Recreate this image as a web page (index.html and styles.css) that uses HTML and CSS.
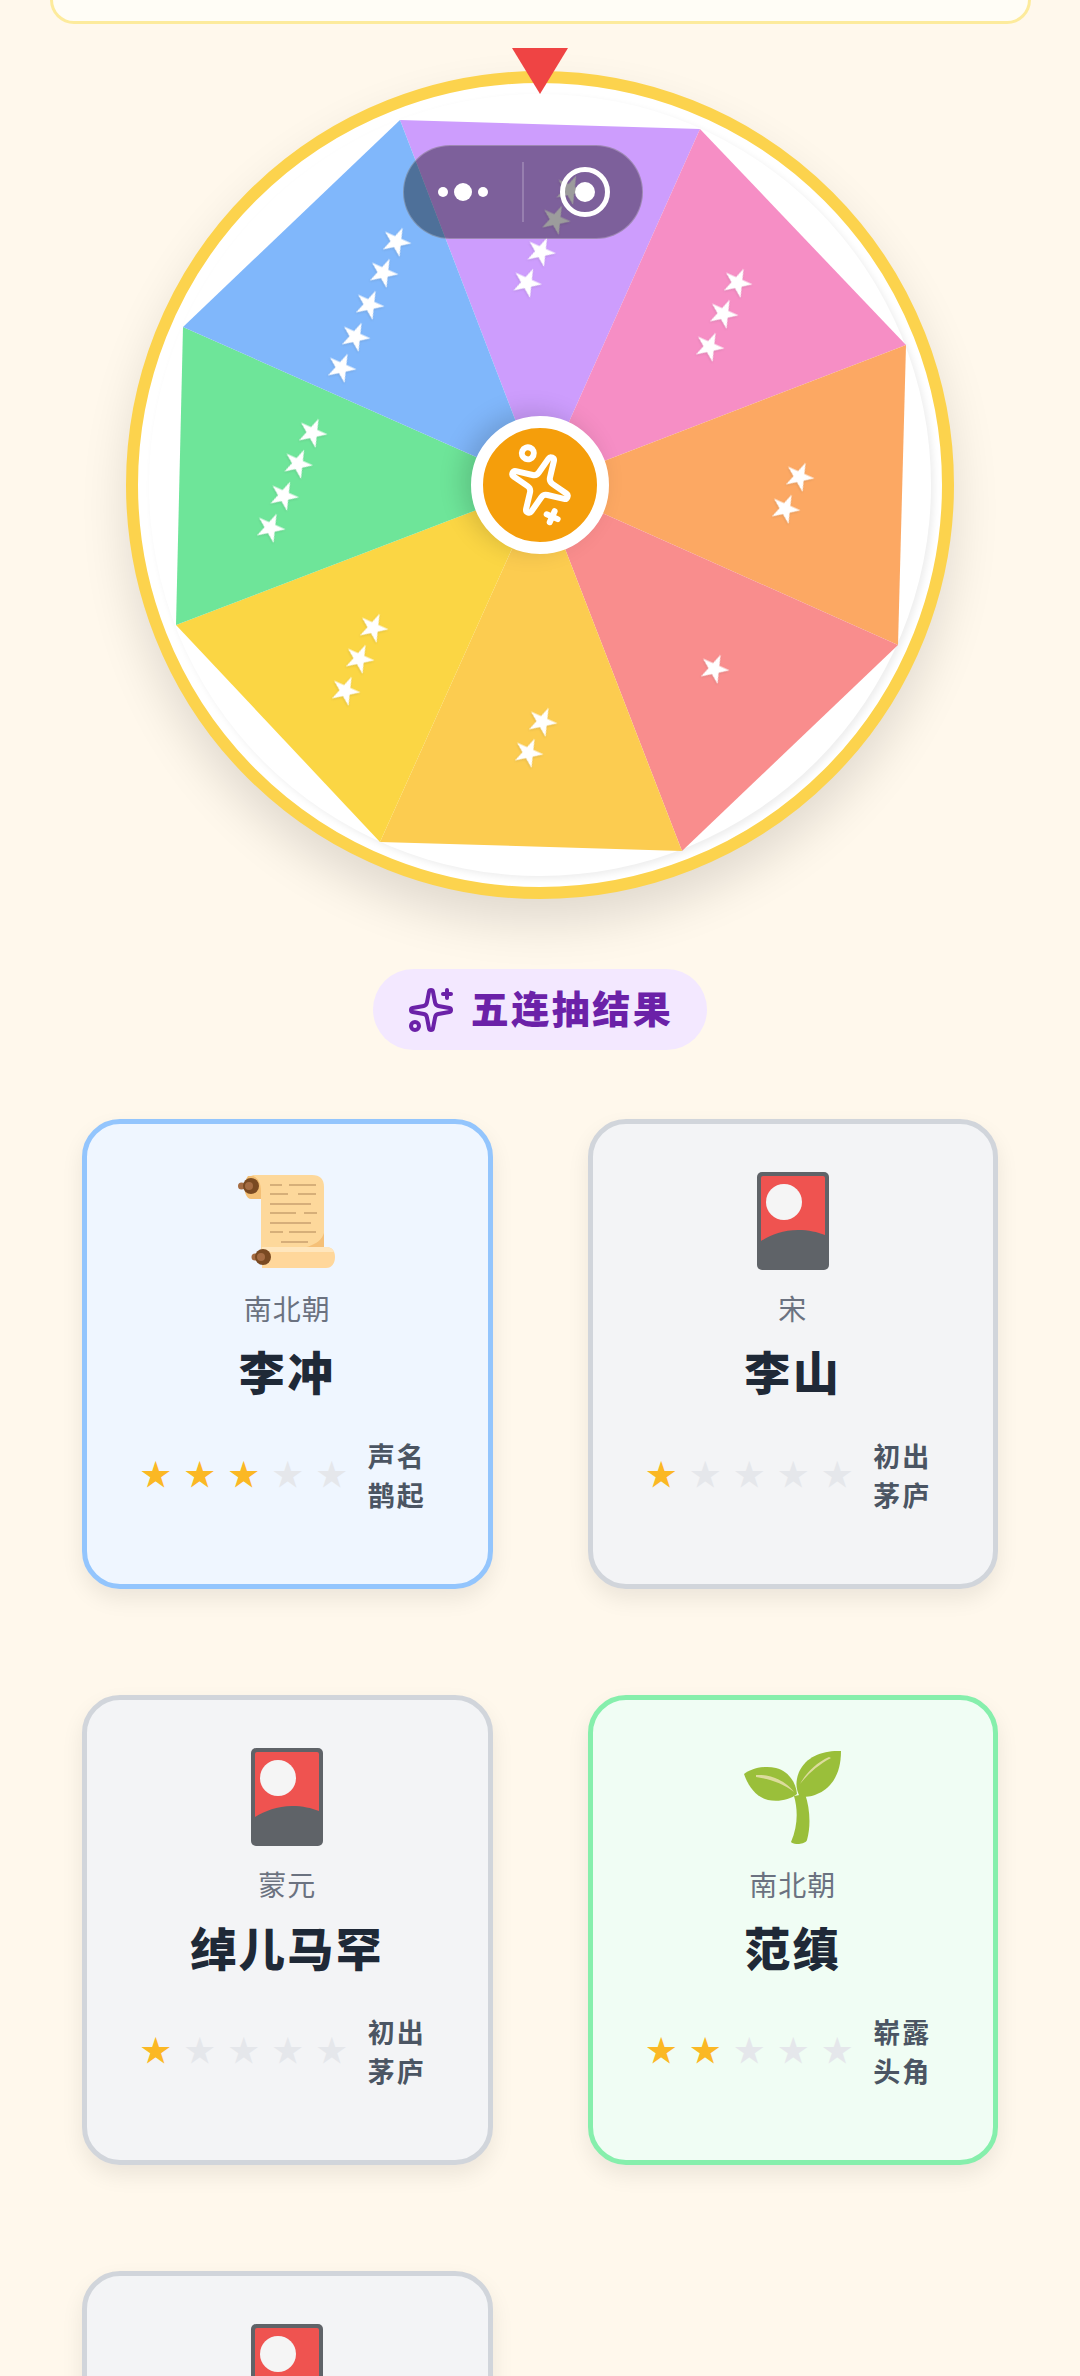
FILE: index.html
```html
<!DOCTYPE html>
<html lang="zh-CN">
<head>
  <meta charset="UTF-8" />
  <meta name="viewport" content="width=device-width, initial-scale=1.0" />
  <title>五连抽结果</title>
  <link rel="stylesheet" href="styles.css">
</head>
<body>
  <div class="page">
    <div class="top-card"></div>

    <!-- Wheel -->
    <section class="wheel-wrap">
      <div class="wheel">
        <div class="wheel-disc"></div>
        <svg class="wheel-slices" viewBox="0 0 804 804">
          <polygon fill="#cd9dfd" points="402.5,402.5 262,37 562,46" />
          <polygon fill="#f68ec5" points="402.5,402.5 562,46 768,262" />
          <polygon fill="#fca863" points="402.5,402.5 768,262 760,562" />
          <polygon fill="#f98d8d" points="402.5,402.5 760,562 544,768" />
          <polygon fill="#fccc50" points="402.5,402.5 544,768 242,759" />
          <polygon fill="#fbd644" points="402.5,402.5 242,759 38,542" />
          <polygon fill="#6ee599" points="402.5,402.5 38,542 45,244" />
          <polygon fill="#80b7fb" points="402.5,402.5 45,244 262,37" />

          <g class="slice-stars" transform="translate(2 -4)">
            <text x="258" y="159" transform="rotate(24 258 159)">★</text>
            <text x="245" y="190" transform="rotate(24 245 190)">★</text>
            <text x="231" y="222" transform="rotate(24 231 222)">★</text>
            <text x="217" y="254" transform="rotate(24 217 254)">★</text>
            <text x="203" y="285" transform="rotate(24 203 285)">★</text>

            <text x="431.5" y="107" transform="rotate(24 431.5 107)">★</text>
            <text x="417" y="137.5" transform="rotate(24 417 137.5)">★</text>
            <text x="402.5" y="169" transform="rotate(24 402.5 169)">★</text>
            <text x="388.5" y="200" transform="rotate(24 388.5 200)">★</text>

            <text x="599" y="200" transform="rotate(24 599 200)">★</text>
            <text x="585" y="231" transform="rotate(24 585 231)">★</text>
            <text x="571" y="264" transform="rotate(24 571 264)">★</text>

            <text x="661" y="394" transform="rotate(24 661 394)">★</text>
            <text x="647" y="426" transform="rotate(24 647 426)">★</text>

            <text x="576" y="586" transform="rotate(24 576 586)">★</text>

            <text x="404" y="639" transform="rotate(24 404 639)">★</text>
            <text x="390" y="670" transform="rotate(24 390 670)">★</text>

            <text x="235" y="545" transform="rotate(24 235 545)">★</text>
            <text x="221" y="576" transform="rotate(24 221 576)">★</text>
            <text x="207" y="608" transform="rotate(24 207 608)">★</text>

            <text x="174" y="350" transform="rotate(24 174 350)">★</text>
            <text x="159.5" y="381" transform="rotate(24 159.5 381)">★</text>
            <text x="145.5" y="413" transform="rotate(24 145.5 413)">★</text>
            <text x="132" y="445" transform="rotate(24 132 445)">★</text>
          </g>
        </svg>

        <div class="hub">
          <svg class="hub-icon" viewBox="0 0 24 24">
            <use href="#sparkles" />
          </svg>
        </div>
        <div class="pointer"></div>
      </div>
    </section>

    <!-- Results -->
    <div class="result-head">
      <div class="result-title">
        <svg class="title-icon" viewBox="0 0 24 24">
          <use href="#sparkles" />
        </svg>
        <span class="title-text">五连抽结果</span>
      </div>
    </div>

    <div class="cards">
      <div class="card card-blue">
        <div class="card-art">
          <svg width="98" height="93" viewBox="0 0 98 93">
            <path fill="#f3bf75" d="M10 1h16v23H13C6 24 4 8 10 1z" />
            <path fill="#fdd89b" d="M12 0h62c8 0 12 4 12 12v70H23V16C23 6 18 1 12 0z" />
            <path fill="#f5c078" d="M86 58v17H40c24 0 42-4 46-17z" />
            <g class="scroll-lines">
              <path d="M32 10h12M51 10h27" />
              <path d="M32 19h18M60 19h18" />
              <path d="M32 29h41" />
              <path d="M32 38h26M66 38h13" />
              <path d="M32 48h41" />
              <path d="M32 57h13M51 57h27" />
              <path d="M43 67h27" />
            </g>
            <path fill="#ffd79b" d="M24 72h64c6 0 9 4 9 10s-3 11-9 11H24z" />
            <path fill="#ffe6bd" d="M24 72h64c4 0 7 2 8 5H24z" />
            <circle cx="3.500" cy="11" r="3.500" fill="#a56c43" />
            <circle cx="13" cy="11" r="8" fill="#7a4a22" />
            <circle cx="11" cy="11" r="4" fill="#a56c43" />
            <circle cx="17" cy="82" r="3.500" fill="#a56c43" />
            <circle cx="25" cy="82" r="8" fill="#7a4a22" />
            <circle cx="23" cy="82" r="4" fill="#a56c43" />
          </svg>
        </div>
        <div class="dynasty">南北朝</div>
        <div class="name">李冲</div>
        <div class="rating">
          <div class="stars"><span class="on">★</span><span class="on">★</span><span class="on">★</span><span>★</span><span>★</span></div>
          <div class="rank">声名鹊起</div>
        </div>
      </div>

      <div class="card card-grey">
        <div class="card-art">
          <svg width="72" height="98" viewBox="0 0 72 98"><use href="#flower-card" /></svg>
        </div>
        <div class="dynasty">宋</div>
        <div class="name">李山</div>
        <div class="rating">
          <div class="stars"><span class="on">★</span><span>★</span><span>★</span><span>★</span><span>★</span></div>
          <div class="rank">初出茅庐</div>
        </div>
      </div>

      <div class="card card-grey">
        <div class="card-art">
          <svg width="72" height="98" viewBox="0 0 72 98"><use href="#flower-card" /></svg>
        </div>
        <div class="dynasty">蒙元</div>
        <div class="name">绰儿马罕</div>
        <div class="rating">
          <div class="stars"><span class="on">★</span><span>★</span><span>★</span><span>★</span><span>★</span></div>
          <div class="rank">初出茅庐</div>
        </div>
      </div>

      <div class="card card-green">
        <div class="card-art">
          <svg width="97" height="94" viewBox="0 0 97 94">
            <path fill="#9abf3a" d="M97 1C80 0 62 6 55 22c-4 10-3 18 1 25 14 1 41-7 41-46z" />
            <path fill="#9abf3a" d="M0 24c6-5 20-9 32-6 12 3 20 14 21 26-7 6-19 8-29 6C12 47 4 36 0 24z" />
            <path fill="#9abf3a" d="M50 46c4 14 4 30-3 46 2 3 14 3 16-2 4-14 3-32-2-46z" />
            <path fill="#dcdc9c" d="M85 7C72 13 62 23 56 34c8-10 18-19 31-26z" />
            <path fill="#dcdc9c" d="M12 25c12-1 28 4 38 17-10-8-24-13-38-15z" />
          </svg>
        </div>
        <div class="dynasty">南北朝</div>
        <div class="name">范缜</div>
        <div class="rating">
          <div class="stars"><span class="on">★</span><span class="on">★</span><span>★</span><span>★</span><span>★</span></div>
          <div class="rank">崭露头角</div>
        </div>
      </div>

      <div class="card card-grey">
        <div class="card-art">
          <svg width="72" height="98" viewBox="0 0 72 98"><use href="#flower-card" /></svg>
        </div>
      </div>
    </div>

    <!-- Mini program capsule -->
    <div class="capsule">
      <div class="capsule-side">
        <i class="dot"></i><i class="dot dot-big"></i><i class="dot"></i>
      </div>
      <div class="capsule-line"></div>
      <div class="capsule-side">
        <div class="target"></div>
      </div>
    </div>
  </div>

  <svg class="defs" width="0" height="0">
    <defs>
      <g id="sparkles" fill="none" stroke="currentColor" stroke-width="2" stroke-linecap="round" stroke-linejoin="round">
        <path d="M11.017 2.814a1 1 0 0 1 1.966 0l1.051 5.558a2 2 0 0 0 1.594 1.594l5.558 1.051a1 1 0 0 1 0 1.966l-5.558 1.051a2 2 0 0 0-1.594 1.594l-1.051 5.558a1 1 0 0 1-1.966 0l-1.051-5.558a2 2 0 0 0-1.594-1.594l-5.558-1.051a1 1 0 0 1 0-1.966l5.558-1.051a2 2 0 0 0 1.594-1.594z" />
        <path d="M20 2v4" />
        <path d="M22 4h-4" />
        <circle cx="4" cy="20" r="2" />
      </g>
      <g id="flower-card">
        <rect width="72" height="98" rx="5" fill="#5f6368" />
        <path fill="#ef5350" d="M4 6a2 2 0 0 1 2-2h60a2 2 0 0 1 2 2v57c-8-3-16-5-27-5-15 0-27 5-37 11z" />
        <circle cx="27" cy="30" r="18" fill="#f5f5f5" />
      </g>
    </defs>
  </svg>
</body>
</html>
```

FILE: styles.css
```css
* { box-sizing: border-box; }
html, body { margin: 0; padding: 0; }
body { background: #fff8ec; font-family: "Noto Sans CJK SC", sans-serif; }
.page { position: relative; height: 2376px; overflow: hidden; }
.defs { position: absolute; }

.top-card { height: 24px; margin: 0 49px 0 50px; background: #fffdf6; border: 3px solid #fdeb9c; border-top: 0; border-radius: 0 0 36px 36px; }

/* wheel */
.wheel-wrap { display: flex; justify-content: center; margin-top: 47px; }
.wheel { position: relative; width: 828px; height: 828px; background: #fff; border: 12px solid #fcd34d; border-radius: 50%; box-shadow: 0 24px 48px rgba(0,0,0,0.12); }
.wheel-disc { position: absolute; top: 11px; left: 11px; width: 782px; height: 782px; border-radius: 50%; box-shadow: 3px 3px 7px rgba(0,0,0,0.07); }
.wheel-slices { position: absolute; top: 0; left: 0; width: 804px; height: 804px; }
.slice-stars text { fill: #fff; font-family: "Noto Sans CJK SC", sans-serif; font-size: 31px; text-anchor: middle; dominant-baseline: central; filter: drop-shadow(0 1px 1px rgba(0,0,0,0.12)); }
.hub { position: absolute; top: 333px; left: 333px; display: flex; align-items: center; justify-content: center; width: 138px; height: 138px; background: #f59e0b; border: 12px solid #fff; border-radius: 50%; box-shadow: -9px -4px 24px rgba(0,0,0,0.15); color: #fff; }
.hub-icon { width: 72px; height: 72px; transform: rotate(114deg); }
.pointer { position: absolute; top: -35px; left: 373.500px; width: 0; height: 0; border-left: 28.500px solid transparent; border-right: 28.500px solid transparent; border-top: 46px solid #ef4444; }

/* title */
.result-head { display: flex; justify-content: center; margin-top: 70px; }
.result-title { display: flex; align-items: center; gap: 16px; height: 81px; padding: 0 34px; background: #f3e8ff; border-radius: 41px; color: #6b21a8; font-size: 38px; font-weight: 900; letter-spacing: 2.500px; }
.title-icon { width: 48px; height: 48px; }
.title-text { padding-bottom: 7px; }

/* cards */
.cards { display: grid; grid-template-columns: 1fr 1fr; gap: 106px 95px; margin-top: 69px; padding: 0 82px; }
.card { min-height: 470px; padding: 48px 0 0; border: 5px solid #d1d5db; border-radius: 38px; background: #f3f4f6; box-shadow: 0 10px 22px rgba(0,0,0,0.08); text-align: center; }
.card-blue { background: #eff6ff; border-color: #93c5fd; }
.card-green { background: #f0fdf4; border-color: #86efac; }
.card-grey { background: #f3f4f6; border-color: #d1d5db; }
.card-art { display: flex; align-items: center; justify-content: center; height: 98px; }
.card-art svg { display: block; }
.scroll-lines path { fill: none; stroke: #c9a16f; stroke-width: 1.500; }
.dynasty { margin-top: 18px; color: #6b7280; font-size: 28px; font-weight: 400; line-height: 40px; letter-spacing: 1px; }
.name { margin-top: 12px; color: #1f2937; font-size: 46px; font-weight: 900; line-height: 60px; letter-spacing: 2.500px; }
.rating { display: flex; align-items: center; justify-content: center; gap: 14px; margin-top: 36px; }
.stars { display: flex; margin-bottom: 6px; }
.stars span { width: 44px; color: #e5e7eb; font-family: "Noto Sans CJK SC", sans-serif; font-size: 30px; line-height: 44px; text-align: center; }
.stars .on { color: #fbb824; }
.rank { width: 73px; color: #4b5563; font-size: 27px; font-weight: 700; line-height: 39px; letter-spacing: 2px; text-align: left; }

/* capsule */
.capsule { position: absolute; top: 145px; left: 403px; display: flex; align-items: center; width: 240px; height: 94px; background: rgba(0,0,0,0.39); border: 1px solid rgba(255,255,255,0.25); border-radius: 47px; }
.capsule-side { display: flex; flex: 1; align-items: center; justify-content: center; gap: 6px; }
.dot { width: 10px; height: 10px; background: #fff; border-radius: 50%; }
.dot-big { width: 18px; height: 18px; }
.capsule-line { width: 2px; height: 60px; background: rgba(255,255,255,0.2); }
.target { display: flex; align-items: center; justify-content: center; width: 50px; height: 50px; margin-left: 4px; border: 5px solid #fff; border-radius: 50%; }
.target::after { content: ""; width: 20px; height: 20px; background: #fff; border-radius: 50%; }
```
